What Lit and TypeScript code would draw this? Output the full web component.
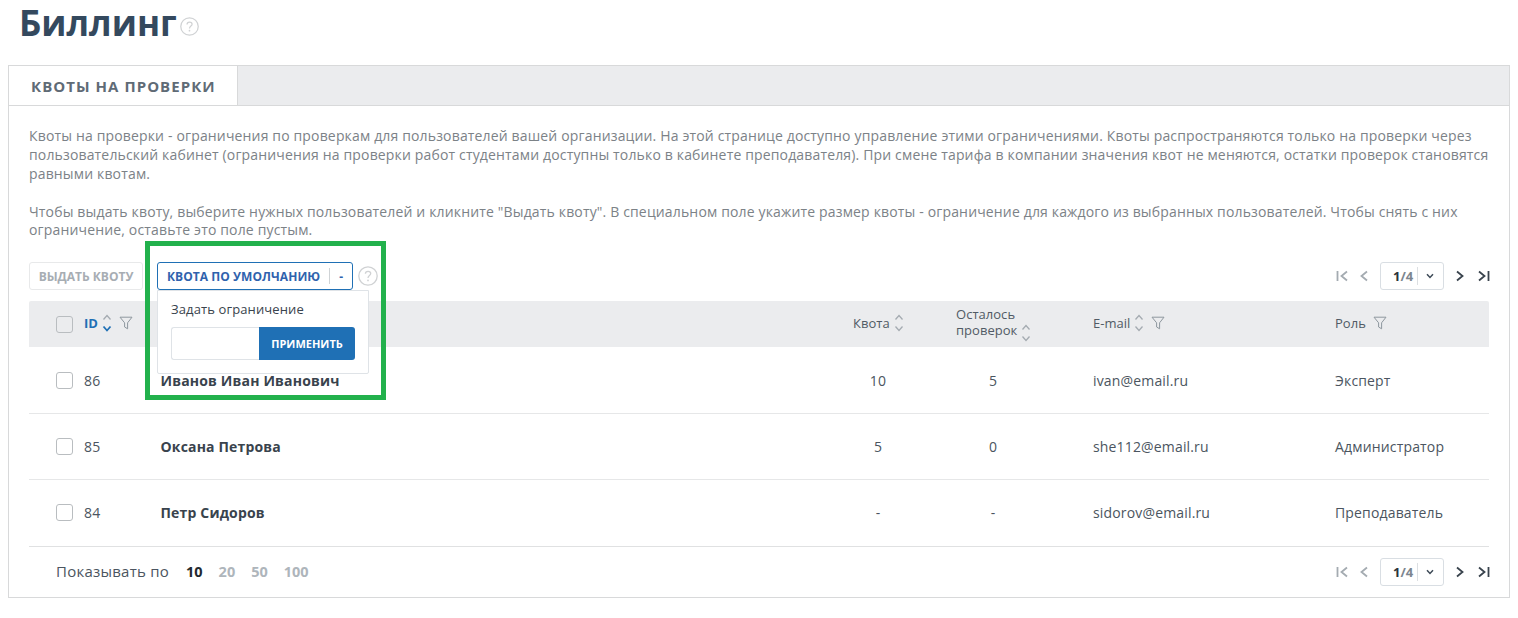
import { LitElement, html, css } from "lit";
import { customElement } from "lit/decorators.js";

const help = (size: number) => html`<svg class="help" width=${size} height=${size} viewBox="0 0 20 20" fill="none">
  <circle cx="10" cy="10" r="9.2" stroke="#d0d2d4" stroke-width="1.3"/>
  <path d="M7.4 7.8c0-1.6 1.2-2.5 2.7-2.5s2.6.9 2.6 2.2c0 2-2.7 2.1-2.7 4.5" stroke="#d0d2d4" stroke-width="1.3"/>
  <circle cx="10" cy="14.4" r=".9" fill="#d0d2d4"/></svg>`;

const funnel = html`<svg class="funnel" width="14" height="14" viewBox="0 0 14 14" fill="none">
  <path d="M1 1.2h12L8.6 6.8v6L5.6 11V6.8z" stroke="#8e979e" stroke-width="1" stroke-linejoin="round"/></svg>`;

const sort = (active = false) => html`<svg class="sort" width="10" height="20" viewBox="0 0 10 20" fill="none">
  <path d="M1.500 6.500 5 2.500l3.500 4" stroke="#a4abb1" stroke-width="1.300"/>
  <path d="M1.500 13.500 5 17.500l3.500-4" stroke=${active ? "#1f70b5" : "#a4abb1"} stroke-width=${active ? "1.800" : "1.300"}/></svg>`;

const pager = html`<div class="pager">
  <svg width="13" height="12" viewBox="0 0 13 12" fill="none"><path d="M1.500 1v10M11 1.500 5.500 6l5.500 4.500" stroke="#a4abb1" stroke-width="1.800"/></svg>
  <svg class="pv" width="8" height="12" viewBox="0 0 8 12" fill="none"><path d="M7 1.500 1.500 6 7 10.500" stroke="#a4abb1" stroke-width="1.800"/></svg>
  <div class="pagebox"><span class="pg"><b>1</b><span>/4</span></span><i class="sep"></i>
    <svg width="8" height="6" viewBox="0 0 8 6" fill="none"><path d="M1 1.200 4 4.400l3-3.200" stroke="#3d4a57" stroke-width="1.500"/></svg></div>
  <svg class="nx" width="8" height="12" viewBox="0 0 8 12" fill="none"><path d="M1 1.500 6.500 6 1 10.500" stroke="#39434d" stroke-width="1.800"/></svg>
  <svg class="ls" width="13" height="12" viewBox="0 0 13 12" fill="none"><path d="M11.500 1v10M2 1.500 7.500 6 2 10.500" stroke="#39434d" stroke-width="1.800"/></svg>
</div>`;

const rows = [
  ["86", "Иванов Иван Иванович", "10", "5", "ivan@email.ru", "Эксперт"],
  ["85", "Оксана Петрова", "5", "0", "she112@email.ru", "Администратор"],
  ["84", "Петр Сидоров", "-", "-", "sidorov@email.ru", "Преподаватель"],
];

@customElement("app-root")
export class AppRoot extends LitElement {
  static styles = css`
    :host { display: block; font-family: "Open Sans", sans-serif; color: #39434d; background: #fff; height: 618px; overflow: hidden; }
    .title { display: flex; align-items: center; height: 45px; padding-left: 19px; gap: 3px; }
    h1 { margin: 0; font-size: 35px; line-height: 45px; font-weight: 700; color: #34495e; }
    .title .help { margin-top: 7px; }
    .card { margin: 20px 8px 0; border: 1px solid #d8d9da; height: 531px; box-sizing: content-box; width: 1500px; }
    .tabs { height: 39px; background: #ebecee; border-bottom: 1px solid #d8d9da; display: flex; }
    .tab { width: 229px; height: 39px; box-sizing: border-box; background: #fff; border-right: 1px solid #d8d9da; display: flex; align-items: center; padding-left: 22px; font-size: 15px; font-weight: 700; letter-spacing: 1.05px; color: #5f6b76; }
    .body { padding: 21px 20px 0; }
    .desc { margin: 0 -12px 0 0; font-size: 14px; line-height: 18.85px; color: #7c8287; letter-spacing: 0.155px; }
    .desc + .desc { margin-top: 19px; }
    .toolbar { position: relative; margin-top: 22px; height: 39px; display: flex; align-items: flex-start; justify-content: space-between; }
    .left { display: flex; gap: 14px; }
    .btn { height: 28px; box-sizing: border-box; border-radius: 3px; font-size: 12px; font-weight: 700; display: flex; align-items: center; }
    .btn.off { width: 114px; border: 1px solid #e8e9ea; color: #a7adb3; justify-content: center; }
    .btn.on { width: 196px; border: 1px solid #1f70b5; color: #2f62ad; padding-left: 9px; letter-spacing: 0.05px; }
    .btn.on .s { width: 1px; height: 16px; background: #cfd3d6; margin: 0 9px; }
    .toolbar .help { position: absolute; left: 329px; top: 4px; }
    .pop { position: absolute; left: 128px; top: 28px; width: 212px; height: 84px; box-sizing: border-box; background: #fff; border: 1px solid #dfe3e7; border-radius: 0 0 2px 2px; padding: 10px 13px 0; z-index: 3; }
    .pop p { margin: 0; font-size: 13px; line-height: 17px; color: #39434d; letter-spacing: 0.12px; }
    .field { margin-top: 9px; display: flex; height: 33px; }
    .input { width: 87px; border: 1px solid #dfe3e7; border-right: 0; border-radius: 3px 0 0 3px; }
    .apply { width: 96px; background: #1f70b5; color: #fff; font-size: 11px; font-weight: 700; border-radius: 0 3px 3px 0; display: flex; align-items: center; justify-content: center; }
    .mark { position: absolute; left: 116px; top: -21px; width: 241px; height: 159px; box-sizing: border-box; border: 5px solid #22b14c; z-index: 4; pointer-events: none; }
    .pager { display: flex; align-items: center; height: 28px; margin-right: -1px; }
    .pv { margin-left: 11px; }
    .pagebox { margin-left: 12px; width: 64px; height: 28px; box-sizing: border-box; border: 1px solid #d9dee3; border-radius: 3px; display: flex; align-items: center; padding-left: 12px; font-size: 13px; }
    .pg b { color: #2b333b; font-weight: 700; } .pg span { color: #7c868f; font-weight: 700; }
    .sep { width: 1px; height: 18px; background: #dcdfe2; margin: 0 8px 0 4px; }
    .nx { margin-left: 12px; } .ls { margin-left: 13px; }
    .row { display: grid; grid-template-columns: 28px 77px 692px 103px 137px 242px 1fr; padding-left: 27px; align-items: center; font-size: 14px; color: #4b5560; letter-spacing: 0.16px; }
    .head { height: 46px; box-sizing: border-box; padding-bottom: 2px; background: #ebecee; border-radius: 2px 2px 0 0; font-size: 13px; color: #515b65; letter-spacing: 0.03px; }
    .data { height: 66px; border-bottom: 1px solid #e6e7e8; box-sizing: border-box; }
    .data.first { height: 67px; }
    .data.last { height: 67px; padding-bottom: 1px; border-bottom-color: #e0e1e2; }
    .cb { width: 17px; height: 17px; box-sizing: border-box; border: 1px solid #b9bdc0; border-radius: 3px; background: #fff; }
    .head .cb { background: #ebecee; margin-top: 2px; }
    .h { display: flex; align-items: center; gap: 4px; }
    .id { color: #1f70b5; font-weight: 700; font-size: 13px; }
    .name { font-weight: 700; color: #39434d; letter-spacing: 0.17px; margin-left: -0.5px; }
    .c1 { width: 50px; text-align: center; } .c2 { width: 74px; text-align: center; }
    .two { line-height: 16px; margin-top: 2px; }
    .two .sort { vertical-align: -8px; margin-left: 4px; }
    .funnel { margin-left: 3px; }
    .footer { height: 50px; display: flex; align-items: center; justify-content: space-between; padding-left: 27px; }
    .sizes { display: flex; align-items: center; font-size: 15px; color: #4b5560; padding-bottom: 2px; }
    .sizes .lbl { letter-spacing: 0.24px; }
    .sizes b { color: #aeb5bb; font-weight: 700; margin-left: 16px; font-size: 14.500px; }
    .sizes b.cur { color: #23292f; margin-left: 17px; }
  `;
  render() {
    return html`
      <div class="title"><h1>Биллинг</h1>${help(19)}</div>
      <div class="card">
        <div class="tabs"><div class="tab">КВОТЫ НА ПРОВЕРКИ</div></div>
        <div class="body">
          <p class="desc">Квоты на проверки - ограничения по проверкам для пользователей вашей организации. На этой странице доступно управление этими ограничениями. Квоты распространяются только на проверки через пользовательский кабинет (ограничения на проверки работ студентами доступны только в кабинете преподавателя). При смене тарифа в компании значения квот не меняются, остатки проверок становятся равными квотам.</p>
          <p class="desc">Чтобы выдать квоту, выберите нужных пользователей и кликните "Выдать квоту". В специальном поле укажите размер квоты - ограничение для каждого из выбранных пользователей. Чтобы снять с них ограничение, оставьте это поле пустым.</p>
          <div class="toolbar">
            <div class="left">
              <div class="btn off">ВЫДАТЬ КВОТУ</div>
              <div class="btn on">КВОТА ПО УМОЛЧАНИЮ<i class="s"></i><span class="d">-</span></div>
            </div>
            ${help(20)}
            ${pager}
            <div class="pop">
              <p>Задать ограничение</p>
              <div class="field"><div class="input"></div><div class="apply">ПРИМЕНИТЬ</div></div>
            </div>
            <div class="mark"></div>
          </div>
          <div class="row head">
            <div class="cb"></div>
            <div class="h"><span class="id">ID</span>${sort(true)}${funnel}</div>
            <div></div>
            <div class="h">Квота ${sort()}</div>
            <div class="two">Осталось<br>проверок${sort()}</div>
            <div class="h">E-mail ${sort()}${funnel}</div>
            <div class="h">Роль ${funnel}</div>
          </div>
          ${rows.map((r, i) => html`<div class="row data ${i === 0 ? "first" : ""} ${i === 2 ? "last" : ""}">
            <div class="cb"></div><div>${r[0]}</div><div class="name">${r[1]}</div>
            <div class="c1">${r[2]}</div><div class="c2">${r[3]}</div><div>${r[4]}</div><div>${r[5]}</div>
          </div>`)}
          <div class="footer">
            <div class="sizes"><span class="lbl">Показывать по</span><b class="cur">10</b><b>20</b><b>50</b><b>100</b></div>
            ${pager}
          </div>
        </div>
      </div>`;
  }
}
